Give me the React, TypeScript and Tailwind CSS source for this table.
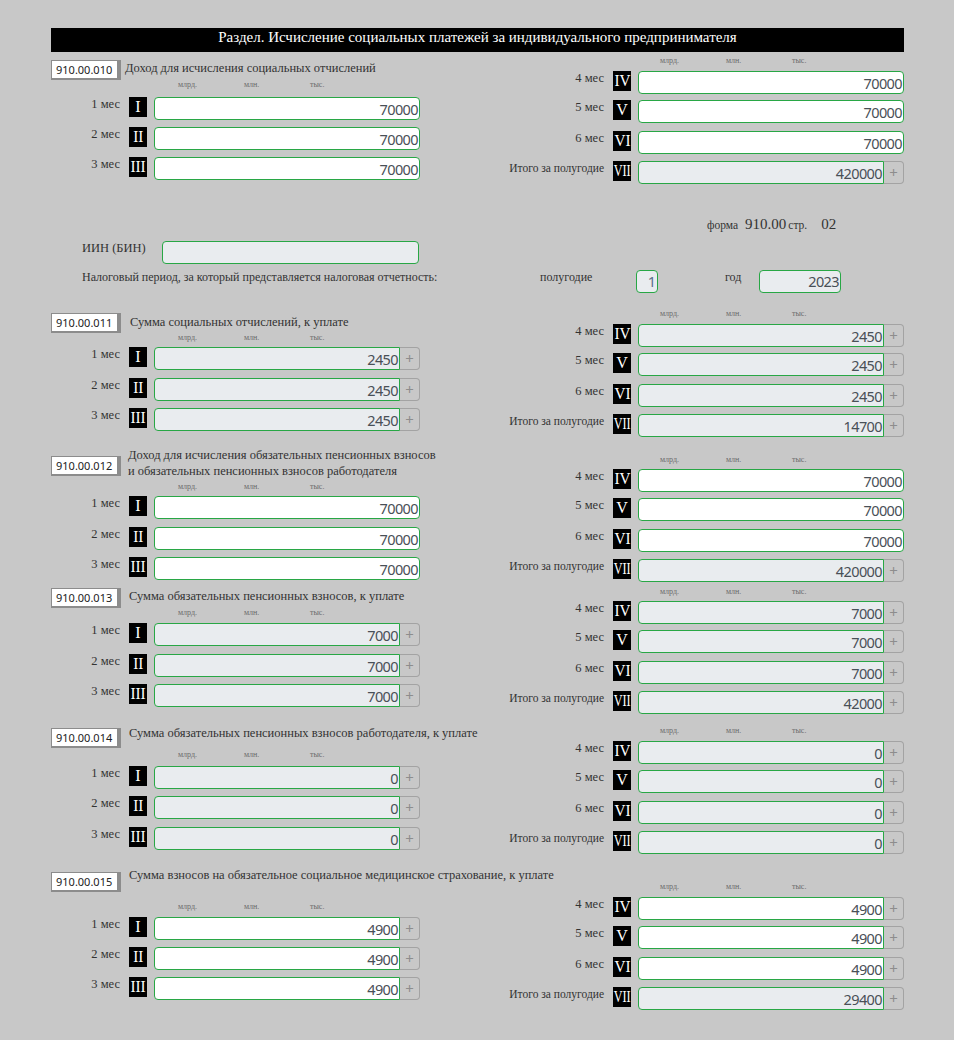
import React from "react";

const serif = "font-['Liberation_Serif','Times_New_Roman',serif]";
const sans = "font-['Noto_Sans','Open_Sans',sans-serif]";

type Kind = "edit" | "ro" | "editPlus";

function Field({ value, kind }: { value: string; kind: Kind }) {
  const hasPlus = kind !== "edit";
  const bg = kind === "ro" ? "bg-[#e9ecef]" : "bg-white";
  return (
    <div className="flex w-[266px] h-[23px]">
      <div
        className={`flex-1 h-full border border-[#28a745] ${
          hasPlus ? "rounded-l-[4px]" : "rounded-[4px]"
        } ${bg} flex items-center justify-end pr-[1px] pt-[1px] text-[14.5px] tracking-[-0.6px] leading-[21px] text-[#495057] ${sans}`}
      >
        {value}
      </div>
      {hasPlus && (
        <div
          className={`w-[20px] h-full border border-l-0 border-[#a3a3a3] rounded-r-[4px] flex items-center justify-center text-[#8d8d8d] text-[15px] leading-none ${sans}`}
        >
          +
        </div>
      )}
    </div>
  );
}

function Badge({ n }: { n: string }) {
  return (
    <div
      className={`w-[18px] h-[20px] bg-black text-white flex items-center justify-center text-[16px] leading-none whitespace-nowrap ${serif}`}
    >
      {n === "VII" ? (
        <span className="inline-block scale-x-[0.76]">VII</span>
      ) : n.length > 1 ? (
        <span className="inline-block scale-x-[0.95]">{n}</span>
      ) : (
        n
      )}
    </div>
  );
}

type RowSpec = { label: string; n: string; value: string; kind: Kind };

function Row({
  spec,
  side,
  mt,
}: {
  spec: RowSpec;
  side: "l" | "r";
  mt: string;
}) {
  const lw = side === "l" ? "w-[69px]" : "w-[124px]";
  const fs = spec.label.startsWith("Итого") ? "text-[11.5px]" : "text-[12.5px]";
  return (
    <div className={`flex items-start ${mt}`}>
      <div
        className={`${lw} shrink-0 text-right whitespace-nowrap ${serif} ${fs} leading-[14px] text-[#333]`}
      >
        {spec.label}
      </div>
      <div className="ml-[9px] shrink-0">
        <Badge n={spec.n} />
      </div>
      <div className="ml-[7px] shrink-0">
        <Field value={spec.value} kind={spec.kind} />
      </div>
    </div>
  );
}

function Units({ side, cls }: { side: "l" | "r"; cls: string }) {
  const pl = side === "l" ? "pl-[127px]" : "pl-[180px]";
  return (
    <div
      className={`flex h-[10px] items-center ${pl} ${cls} text-[8px] leading-[10px] text-[#6a6a6a] ${serif}`}
    >
      <span className="w-[66px]">млрд.</span>
      <span className="w-[66px]">млн.</span>
      <span>тыс.</span>
    </div>
  );
}

type SectionSpec = {
  code: string;
  label: React.ReactNode;
  mt: string;
  leftPt: string;
  boxMt: string;
  labelMl: string;
  labelMt: string;
  unitsLMt: string;
  rowsLMt: string;
  leftGaps: [string, string];
  rightPt: string;
  rowsRMt: string;
  left: RowSpec[];
  right: RowSpec[];
};

function Section({ s }: { s: SectionSpec }) {
  const rightGaps = [s.rowsRMt, "mt-[6px]", "mt-[8px]", "mt-[7px]"];
  const leftGaps = [s.rowsLMt, s.leftGaps[0], s.leftGaps[1]];
  return (
    <div className={`flex justify-between items-start ${s.mt}`}>
      <div className={`w-[369px] ${s.leftPt}`}>
        <div className="flex items-start">
          <div
            className={`w-[70px] h-[20px] shrink-0 bg-white border border-[#8c8c8c] border-r-[4px] border-b-[2px] pl-[4px] text-[11px] leading-[17px] text-[#222] ${sans} ${s.boxMt}`}
          >
            {s.code}
          </div>
          <div
            className={`${s.labelMl} ${s.labelMt} whitespace-nowrap text-[12.5px] leading-[16px] text-[#333] ${serif}`}
          >
            {s.label}
          </div>
        </div>
        <Units side="l" cls={s.unitsLMt} />
        {s.left.map((r, i) => (
          <Row key={i} spec={r} side="l" mt={leftGaps[i]} />
        ))}
      </div>
      <div className={`w-[424px] ${s.rightPt}`}>
        <Units side="r" cls="" />
        {s.right.map((r, i) => (
          <Row key={i} spec={r} side="r" mt={rightGaps[i]} />
        ))}
      </div>
    </div>
  );
}

function leftRows(v: string, kind: Kind): RowSpec[] {
  return [
    { label: "1 мес", n: "I", value: v, kind },
    { label: "2 мес", n: "II", value: v, kind },
    { label: "3 мес", n: "III", value: v, kind },
  ];
}

function rightRows(v: string, total: string, kind: Kind): RowSpec[] {
  return [
    { label: "4 мес", n: "IV", value: v, kind },
    { label: "5 мес", n: "V", value: v, kind },
    { label: "6 мес", n: "VI", value: v, kind },
    { label: "Итого за полугодие", n: "VII", value: total, kind: "ro" },
  ];
}

const s010: SectionSpec = {
  code: "910.00.010",
  label: "Доход для исчисления социальных отчислений",
  mt: "mt-[4px]",
  leftPt: "pt-[4px]",
  boxMt: "",
  labelMl: "ml-[4px]",
  labelMt: "",
  unitsLMt: "",
  rowsLMt: "mt-[7px]",
  leftGaps: ["mt-[7px]", "mt-[7px]"],
  rightPt: "",
  rowsRMt: "mt-[5px]",
  left: leftRows("70000", "edit"),
  right: rightRows("70000", "420000", "edit"),
};

const s011: SectionSpec = {
  code: "910.00.011",
  label: "Сумма социальных отчислений, к уплате",
  mt: "mt-[16px]",
  leftPt: "pt-[4px]",
  boxMt: "",
  labelMl: "ml-[9px]",
  labelMt: "mt-[1px]",
  unitsLMt: "",
  rowsLMt: "mt-[4px]",
  leftGaps: ["mt-[8px]", "mt-[7px]"],
  rightPt: "",
  rowsRMt: "mt-[5px]",
  left: leftRows("2450", "ro"),
  right: rightRows("2450", "14700", "ro"),
};

const s012: SectionSpec = {
  code: "910.00.012",
  label: (
    <>
      Доход для исчисления обязательных пенсионных взносов
      <br />и обязательных пенсионных взносов работодателя
    </>
  ),
  mt: "mt-[10px]",
  leftPt: "",
  boxMt: "mt-[9px]",
  labelMl: "ml-[7px]",
  labelMt: "",
  unitsLMt: "mt-[3px]",
  rowsLMt: "mt-[4px]",
  leftGaps: ["mt-[8px]", "mt-[7px]"],
  rightPt: "pt-[8px]",
  rowsRMt: "mt-[4px]",
  left: leftRows("70000", "edit"),
  right: rightRows("70000", "420000", "edit"),
};

const s013: SectionSpec = {
  code: "910.00.013",
  label: "Сумма обязательных пенсионных взносов, к уплате",
  mt: "mt-[5px]",
  leftPt: "pt-[1px]",
  boxMt: "",
  labelMl: "ml-[8px]",
  labelMt: "",
  unitsLMt: "",
  rowsLMt: "mt-[5px]",
  leftGaps: ["mt-[8px]", "mt-[7px]"],
  rightPt: "",
  rowsRMt: "mt-[4px]",
  left: leftRows("7000", "ro"),
  right: rightRows("7000", "42000", "ro"),
};

const s014: SectionSpec = {
  code: "910.00.014",
  label: "Сумма обязательных пенсионных взносов работодателя, к уплате",
  mt: "mt-[11px]",
  leftPt: "",
  boxMt: "mt-[3px]",
  labelMl: "ml-[8px]",
  labelMt: "",
  unitsLMt: "mt-[2px]",
  rowsLMt: "mt-[6px]",
  leftGaps: ["mt-[7px]", "mt-[8px]"],
  rightPt: "pt-[1px]",
  rowsRMt: "mt-[5px]",
  left: leftRows("0", "ro"),
  right: rightRows("0", "0", "ro"),
};

const s015: SectionSpec = {
  code: "910.00.015",
  label: "Сумма взносов на обязательное социальное медицинское страхование, к уплате",
  mt: "mt-[13px]",
  leftPt: "",
  boxMt: "mt-[5px]",
  labelMl: "ml-[8px]",
  labelMt: "",
  unitsLMt: "mt-[10px]",
  rowsLMt: "mt-[5px]",
  leftGaps: ["mt-[7px]", "mt-[7px]"],
  rightPt: "pt-[15px]",
  rowsRMt: "mt-[5px]",
  left: leftRows("4900", "editPlus"),
  right: rightRows("4900", "29400", "editPlus"),
};

export default function App() {
  return (
    <div className="min-h-[1040px] w-full bg-[#c8c8c8] pt-[28px]">
      <div className="ml-[51px] w-[853px]">
        <div
          className={`h-[24px] bg-black text-white text-center text-[15px] leading-[18px] ${serif}`}
        >
          Раздел. Исчисление социальных платежей за индивидуального предпринимателя
        </div>

        <Section s={s010} />

        <div
          className={`mt-[29px] h-[18px] flex items-baseline pl-[656px] text-[#333] ${serif}`}
        >
          <span className="text-[11.5px]">форма</span>
          <span className="ml-[7px] text-[15px]">910.00</span>
          <span className="ml-[2px] text-[11.5px]">стр.</span>
          <span className="ml-[14px] text-[15px]">02</span>
        </div>

        <div className="mt-[10px] flex items-start">
          <div
            className={`ml-[31px] w-[80px] text-[12.5px] leading-[14px] text-[#333] ${serif}`}
          >
            ИИН (БИН)
          </div>
          <div className="w-[257px] h-[23px] border border-[#28a745] rounded-[4px] bg-[#e9ecef]" />
        </div>

        <div className="mt-[6px] flex items-start">
          <div
            className={`ml-[31px] w-[458px] whitespace-nowrap text-[12px] leading-[14px] text-[#333] ${serif}`}
          >
            Налоговый период, за который представляется налоговая отчетность:
          </div>
          <div className={`w-[96px] text-[12px] leading-[14px] text-[#333] ${serif}`}>
            полугодие
          </div>
          <div
            className={`w-[22px] h-[23px] border border-[#28a745] rounded-[4px] bg-[#e9ecef] flex items-center justify-end pr-[1px] pt-[1px] text-[14.5px] text-[#5a6e8a] ${sans}`}
          >
            1
          </div>
          <div
            className={`ml-[67px] w-[34px] text-[12px] leading-[14px] text-[#333] ${serif}`}
          >
            год
          </div>
          <div
            className={`w-[82px] h-[23px] border border-[#28a745] rounded-[4px] bg-[#e9ecef] flex items-center justify-end pr-[1px] pt-[1px] text-[14.5px] tracking-[-0.6px] text-[#495057] ${sans}`}
          >
            2023
          </div>
        </div>

        <Section s={s011} />
        <Section s={s012} />
        <Section s={s013} />
        <Section s={s014} />
        <Section s={s015} />
      </div>
    </div>
  );
}
